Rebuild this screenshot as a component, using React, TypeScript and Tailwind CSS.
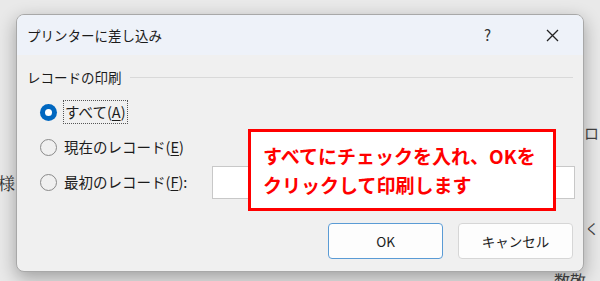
export default function App() {
  const jp = { fontFamily: '"Noto Sans CJK JP", "Noto Sans", sans-serif' }

  return (
    <div
      className="relative h-[281px] w-[600px] overflow-hidden bg-[#e9e9e9] text-[#1b1b1b]"
      style={jp}
    >
      {/* document text behind the dialog */}
      <span className="absolute left-[-2px] top-[170px] font-['Noto_Serif_CJK_JP','Liberation_Serif',serif] text-[17px] text-[#333]">
        様
      </span>
      <span className="absolute left-[584px] top-[122px] text-[15px] text-[#444]">ロ</span>
      <span className="absolute left-[585px] top-[218px] whitespace-nowrap text-[14px] text-[#444]">くう</span>
      <span className="absolute left-[554px] top-[268px] whitespace-nowrap text-[16px] text-[#444]">数敬</span>

      {/* dialog */}
      <div className="relative ml-[16px] mt-[14px] flex h-[258px] w-[568px] flex-col overflow-hidden rounded-[8px] border border-[#a8a8a8] bg-[#f0f0f0] shadow-[0_6px_18px_rgba(0,0,0,0.32)]">
        {/* title bar */}
        <div className="flex h-[40px] items-center bg-[#eef2f9] pl-[10px] pr-[24px]">
          <span className="flex-1 text-[13.5px]">プリンターに差し込み</span>
          <span className="mr-[55px] text-[15px] text-[#333]">?</span>
          <svg width="13" height="13" viewBox="0 0 13 13" className="text-[#222]">
            <path d="M1 1 L12 12 M12 1 L1 12" stroke="currentColor" strokeWidth="1.3" />
          </svg>
        </div>

        {/* body */}
        <div className="flex flex-1 flex-col px-[10px] pt-[12px]">
          <div className="flex items-center gap-[8px] text-[13.5px]">
            <span>レコードの印刷</span>
            <div className="h-px flex-1 bg-[#d9d9d9]" />
          </div>

          <div className="mt-[13px] flex flex-col gap-[11px] pl-[13px] text-[14.5px]">
            <div className="flex h-[24px] items-center gap-[6px]">
              <span className="flex h-[17px] w-[17px] items-center justify-center rounded-full bg-[#0067c0]">
                <span className="h-[7px] w-[7px] rounded-full bg-white" />
              </span>
              <span className="border border-dotted border-[#555] px-[1px] leading-[22px]">
                すべて(<span className="underline underline-offset-2">A</span>)
              </span>
            </div>
            <div className="flex h-[24px] items-center gap-[7px]">
              <span className="h-[17px] w-[17px] rounded-full border border-[#8a8a8a]" />
              <span>
                現在のレコード(<span className="underline underline-offset-2">E</span>)
              </span>
            </div>
            <div className="flex h-[24px] items-center">
              <span className="mr-[7px] h-[17px] w-[17px] shrink-0 rounded-full border border-[#8a8a8a]" />
              <span className="w-[148px] shrink-0 whitespace-nowrap">
                最初のレコード(<span className="underline underline-offset-2">F</span>):
              </span>
              <div className="h-[33px] w-[363px] shrink-0 border border-[#c8c8c8] bg-white" />
            </div>
          </div>

          <div className="mt-auto mb-[12px] flex justify-end gap-[15px] text-[13.5px]">
            <button className="h-[36px] w-[115px] rounded-[4px] border border-[#5a9bd5] bg-[#fdfdfd]">
              OK
            </button>
            <button className="h-[36px] w-[115px] rounded-[4px] border border-[#d6d6d6] bg-[#fdfdfd]">
              キャンセル
            </button>
          </div>
        </div>

        {/* annotation callout */}
        <div className="absolute left-[231px] top-[114px] flex h-[82px] w-[308px] flex-col justify-center border-[3px] border-[#ff0000] bg-white pl-[12px] text-[19px] font-bold leading-[29px] text-[#ff0000]">
          <span>すべてにチェックを入れ、OKを</span>
          <span>クリックして印刷します</span>
        </div>
      </div>
    </div>
  )
}
